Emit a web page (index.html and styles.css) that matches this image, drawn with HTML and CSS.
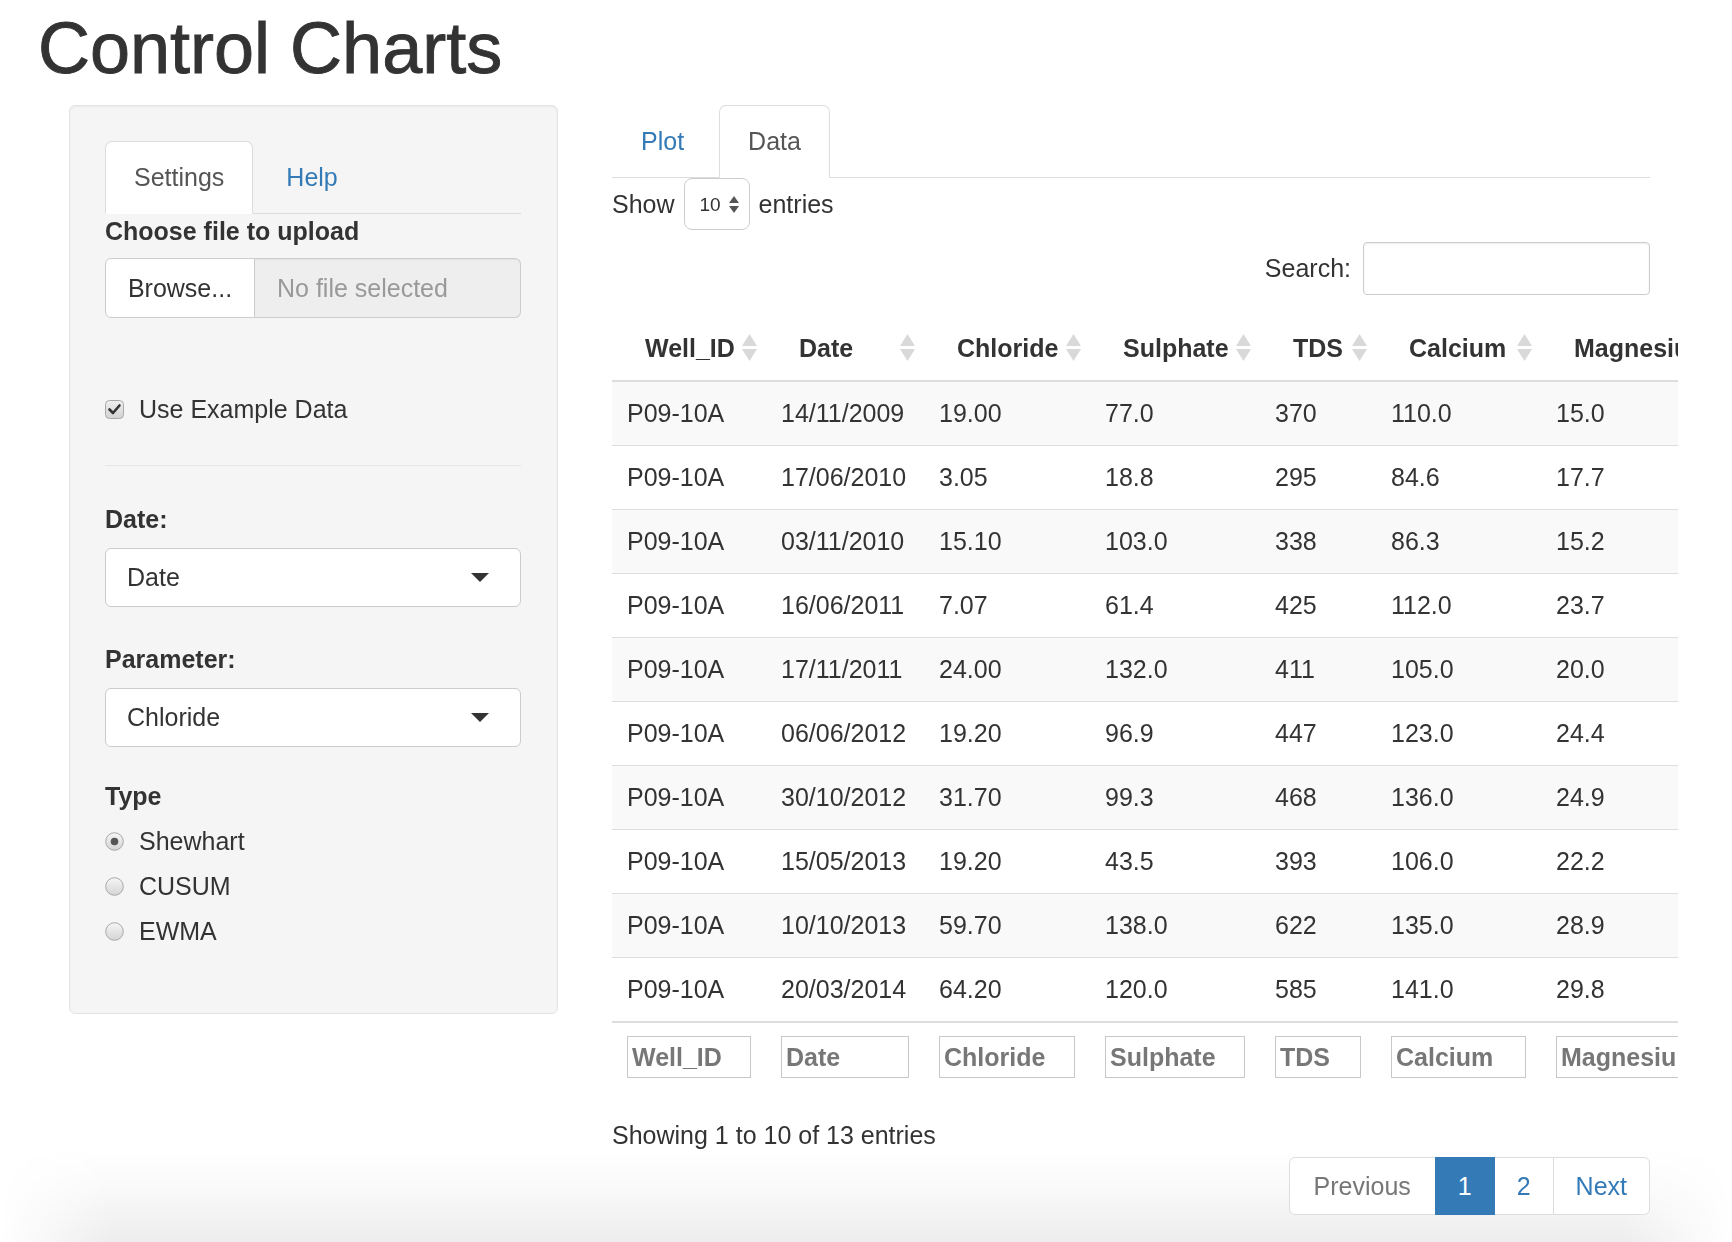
FILE: index.html
```html
<!DOCTYPE html>
<html lang="en">
<head>
<meta charset="utf-8">
<title>Control Charts</title>
<link rel="stylesheet" href="styles.css">
</head>
<body>
<div class="window-shadow"></div>
<div class="page">
  <h1 class="title">Control Charts</h1>
  <div class="layout">
    <aside class="well">
      <nav class="tabs">
        <span class="tab active">Settings</span>
        <span class="tab link">Help</span>
      </nav>
      <div class="label">Choose file to upload</div>
      <div class="file-input">
        <span class="browse">Browse...</span>
        <span class="file-name">No file selected</span>
      </div>
      <div class="check-row">
        <svg class="checkbox" width="19" height="19" viewBox="0 0 19 19">
          <defs>
            <linearGradient id="cbg" x1="0" y1="0" x2="0" y2="1">
              <stop offset="0" stop-color="#f0f0f0"/>
              <stop offset="1" stop-color="#d2d2d2"/>
            </linearGradient>
          </defs>
          <rect x="0.5" y="0.5" width="18" height="18" rx="4" fill="url(#cbg)" stroke="#a8a8a8"/>
          <path d="M4.5 9.5 L8 13 L14.5 5.5" fill="none" stroke="#333" stroke-width="2.6" stroke-linecap="round" stroke-linejoin="round"/>
        </svg>
        <span>Use Example Data</span>
      </div>
      <hr class="divider">
      <div class="label label-date">Date:</div>
      <div class="select">
        <span>Date</span>
        <svg width="18" height="9" viewBox="0 0 18 9"><polygon points="0,0 18,0 9,9" fill="#333"/></svg>
      </div>
      <div class="label label-param">Parameter:</div>
      <div class="select">
        <span>Chloride</span>
        <svg width="18" height="9" viewBox="0 0 18 9"><polygon points="0,0 18,0 9,9" fill="#333"/></svg>
      </div>
      <div class="label label-type">Type</div>
      <div class="radios">
        <div class="radio-row">
          <svg width="19" height="19" viewBox="0 0 19 19">
            <defs>
              <linearGradient id="rbg" x1="0" y1="0" x2="0" y2="1">
                <stop offset="0" stop-color="#f6f6f6"/>
                <stop offset="1" stop-color="#d4d4d4"/>
              </linearGradient>
            </defs>
            <circle cx="9.5" cy="9.5" r="8.8" fill="url(#rbg)" stroke="#a8a8a8"/>
            <circle cx="9.5" cy="9.5" r="3.8" fill="#555"/>
          </svg>
          <span>Shewhart</span>
        </div>
        <div class="radio-row">
          <svg width="19" height="19" viewBox="0 0 19 19"><circle cx="9.5" cy="9.5" r="8.8" fill="url(#rbg)" stroke="#a8a8a8"/></svg>
          <span>CUSUM</span>
        </div>
        <div class="radio-row">
          <svg width="19" height="19" viewBox="0 0 19 19"><circle cx="9.5" cy="9.5" r="8.8" fill="url(#rbg)" stroke="#a8a8a8"/></svg>
          <span>EWMA</span>
        </div>
      </div>
    </aside>

    <main class="main">
      <nav class="tabs main-tabs">
        <span class="tab link">Plot</span>
        <span class="tab active">Data</span>
      </nav>
      <div class="length-row">
        <span>Show</span>
        <span class="len-select">
          <span>10</span>
          <svg width="10" height="17" viewBox="0 0 10 17"><polygon points="5,0 10,7 0,7" fill="#555"/><polygon points="0,10 10,10 5,17" fill="#555"/></svg>
        </span>
        <span>entries</span>
      </div>
      <div class="search-row">
        <span>Search:</span>
        <span class="search-input"></span>
      </div>
      <div class="table-wrap">
        <table class="data">
          <colgroup>
            <col style="width:154px"><col style="width:158px"><col style="width:166px"><col style="width:170px"><col style="width:116px"><col style="width:165px"><col style="width:200px">
          </colgroup>
          <thead>
            <tr>
              <th>Well_ID<svg class="sort" width="15" height="28" viewBox="0 0 15 28"><polygon points="7.5,0 15,12 0,12"/><polygon points="0,15 15,15 7.5,27"/></svg></th>
              <th>Date<svg class="sort" width="15" height="28" viewBox="0 0 15 28"><polygon points="7.5,0 15,12 0,12"/><polygon points="0,15 15,15 7.5,27"/></svg></th>
              <th>Chloride<svg class="sort" width="15" height="28" viewBox="0 0 15 28"><polygon points="7.5,0 15,12 0,12"/><polygon points="0,15 15,15 7.5,27"/></svg></th>
              <th>Sulphate<svg class="sort" width="15" height="28" viewBox="0 0 15 28"><polygon points="7.5,0 15,12 0,12"/><polygon points="0,15 15,15 7.5,27"/></svg></th>
              <th>TDS<svg class="sort" width="15" height="28" viewBox="0 0 15 28"><polygon points="7.5,0 15,12 0,12"/><polygon points="0,15 15,15 7.5,27"/></svg></th>
              <th>Calcium<svg class="sort" width="15" height="28" viewBox="0 0 15 28"><polygon points="7.5,0 15,12 0,12"/><polygon points="0,15 15,15 7.5,27"/></svg></th>
              <th>Magnesium<svg class="sort" width="15" height="28" viewBox="0 0 15 28"><polygon points="7.5,0 15,12 0,12"/><polygon points="0,15 15,15 7.5,27"/></svg></th>
            </tr>
          </thead>
          <tbody>
            <tr><td>P09-10A</td><td>14/11/2009</td><td>19.00</td><td>77.0</td><td>370</td><td>110.0</td><td>15.0</td></tr>
            <tr><td>P09-10A</td><td>17/06/2010</td><td>3.05</td><td>18.8</td><td>295</td><td>84.6</td><td>17.7</td></tr>
            <tr><td>P09-10A</td><td>03/11/2010</td><td>15.10</td><td>103.0</td><td>338</td><td>86.3</td><td>15.2</td></tr>
            <tr><td>P09-10A</td><td>16/06/2011</td><td>7.07</td><td>61.4</td><td>425</td><td>112.0</td><td>23.7</td></tr>
            <tr><td>P09-10A</td><td>17/11/2011</td><td>24.00</td><td>132.0</td><td>411</td><td>105.0</td><td>20.0</td></tr>
            <tr><td>P09-10A</td><td>06/06/2012</td><td>19.20</td><td>96.9</td><td>447</td><td>123.0</td><td>24.4</td></tr>
            <tr><td>P09-10A</td><td>30/10/2012</td><td>31.70</td><td>99.3</td><td>468</td><td>136.0</td><td>24.9</td></tr>
            <tr><td>P09-10A</td><td>15/05/2013</td><td>19.20</td><td>43.5</td><td>393</td><td>106.0</td><td>22.2</td></tr>
            <tr><td>P09-10A</td><td>10/10/2013</td><td>59.70</td><td>138.0</td><td>622</td><td>135.0</td><td>28.9</td></tr>
            <tr><td>P09-10A</td><td>20/03/2014</td><td>64.20</td><td>120.0</td><td>585</td><td>141.0</td><td>29.8</td></tr>
          </tbody>
          <tfoot>
            <tr>
              <td><span class="filter">Well_ID</span></td>
              <td><span class="filter">Date</span></td>
              <td><span class="filter">Chloride</span></td>
              <td><span class="filter">Sulphate</span></td>
              <td><span class="filter">TDS</span></td>
              <td><span class="filter">Calcium</span></td>
              <td><span class="filter">Magnesium</span></td>
            </tr>
          </tfoot>
        </table>
      </div>
      <div class="info">Showing 1 to 10 of 13 entries</div>
      <div class="pager-row">
        <ul class="pagination">
          <li class="disabled">Previous</li>
          <li class="current">1</li>
          <li>2</li>
          <li>Next</li>
        </ul>
      </div>
    </main>
  </div>
</div>
</body>
</html>
```

FILE: styles.css
```css
html {
  margin: 0;
  padding: 0;
  background: #fff;
  overflow: hidden;
}

body {
  margin: 0;
  padding: 0;
  overflow: hidden;
  font-family: "Liberation Sans", Arial, Helvetica, sans-serif;
  font-size: 25px;
  line-height: 35px;
  color: #333;
}

/* soft window shadow along the bottom edge of the screenshot */
.window-shadow {
  position: fixed;
  left: 0;
  right: 0;
  bottom: 0;
  height: 95px;
  background: linear-gradient(to bottom, rgba(0, 0, 0, 0), rgba(0, 0, 0, 0.018) 40%, rgba(0, 0, 0, 0.07));
  -webkit-mask-image: linear-gradient(to right, transparent 0, #000 110px, #000 calc(100% - 110px), transparent 100%);
  mask-image: linear-gradient(to right, transparent 0, #000 110px, #000 calc(100% - 110px), transparent 100%);
  z-index: -1;
}

.page {
  padding: 9px 0 0 38px;
}

.title {
  margin: 0 0 17px 0;
  font-size: 72px;
  line-height: 79px;
  font-weight: normal;
  color: #333;
  -webkit-text-stroke: 0.9px #333;
}

.layout {
  display: flex;
  align-items: flex-start;
}

/* ---------- sidebar well ---------- */
.well {
  margin-left: 31px;
  width: 489px;
  box-sizing: border-box;
  padding: 35px 36px 64px 35px;
  background: #f5f5f5;
  border: 1px solid #e3e3e3;
  border-radius: 6px;
  box-shadow: inset 0 1px 2px rgba(0, 0, 0, 0.05);
}

.tabs {
  display: flex;
  border-bottom: 1px solid #ddd;
  height: 72px;
}

.tab {
  box-sizing: border-box;
  height: 73px;
  margin-bottom: -1px;
  margin-right: 4px;
  padding: 0 28px;
  display: flex;
  align-items: center;
  border: 1px solid transparent;
  border-radius: 7px 7px 0 0;
  color: #555;
}

.tab.active {
  background: #fff;
  border-color: #ddd;
  border-bottom-color: transparent;
}

.tab.link {
  color: #337ab7;
}

.label {
  font-weight: bold;
  color: #333;
}

.file-input {
  display: flex;
  margin-top: 9px;
  height: 60px;
}

.browse {
  box-sizing: border-box;
  width: 150px;
  display: flex;
  align-items: center;
  justify-content: center;
  background: #fff;
  border: 1px solid #ccc;
  border-radius: 6px 0 0 6px;
  color: #333;
}

.file-name {
  flex: 1;
  display: flex;
  align-items: center;
  padding-left: 22px;
  background: #eee;
  border: 1px solid #ccc;
  border-left: 0;
  border-radius: 0 6px 6px 0;
  color: #999;
  box-shadow: inset 0 1px 1px rgba(0, 0, 0, 0.05);
}

.check-row {
  margin-top: 74px;
  display: flex;
  align-items: center;
  gap: 15px;
}

.divider {
  margin: 38px 0 0 0;
  border: 0;
  border-top: 1px solid #e6e6e6;
}

.label-date {
  margin-top: 36px;
}

.select {
  box-sizing: border-box;
  margin-top: 11px;
  height: 59px;
  display: flex;
  align-items: center;
  justify-content: space-between;
  padding: 0 31px 0 21px;
  background: #fff;
  border: 1px solid #ccc;
  border-radius: 6px;
}

.label-param {
  margin-top: 35px;
}

.label-param + .select {
  margin-top: 11px;
}

.label-type {
  margin-top: 32px;
}

.radios {
  margin-top: 10px;
  display: flex;
  flex-direction: column;
  gap: 10px;
}

.radio-row {
  display: flex;
  align-items: center;
  gap: 15px;
}

/* ---------- main panel ---------- */
.main {
  margin-left: 54px;
  width: 1038px;
}

.main-tabs .tab {
  margin-right: 6px;
}

.length-row {
  margin-top: 0;
  display: flex;
  align-items: center;
  gap: 9px;
  height: 52px;
}

.len-select {
  box-sizing: border-box;
  width: 66px;
  height: 52px;
  display: flex;
  align-items: center;
  gap: 8px;
  padding-left: 15px;
  border: 1px solid #ccc;
  border-radius: 8px;
  font-size: 19px;
  background: #fff;
}

.search-row {
  margin-top: 12px;
  display: flex;
  justify-content: flex-end;
  align-items: center;
  gap: 12px;
}

.search-input {
  box-sizing: border-box;
  width: 287px;
  height: 53px;
  border: 1px solid #ccc;
  border-radius: 4px;
  box-shadow: inset 0 1px 2px rgba(0, 0, 0, 0.08);
}

.table-wrap {
  margin-top: 22px;
  width: 1066px;
  overflow: hidden;
}

.data {
  table-layout: fixed;
  width: 1129px;
  border-collapse: collapse;
  border-spacing: 0;
}

.data th {
  position: relative;
  text-align: left;
  font-weight: bold;
  padding: 14px 15px 14px 33px;
  border-bottom: 2px solid #ddd;
  white-space: nowrap;
}

.data th .sort {
  position: absolute;
  right: 9px;
  top: 17px;
  fill: #d9d9d9;
}

.data td {
  padding: 14px 15px;
  border-top: 1px solid #ddd;
  white-space: nowrap;
}

.data tbody tr:nth-child(odd) td {
  background: #f9f9f9;
}

.data tfoot td {
  border-top: 2px solid #ddd;
  padding: 13px 15px 13px 15px;
}

.filter {
  display: block;
  box-sizing: border-box;
  height: 42px;
  line-height: 40px;
  padding-left: 4px;
  border: 1px solid #c8c8c8;
  font-weight: bold;
  color: #777;
  overflow: hidden;
  white-space: nowrap;
}

.info {
  margin-top: 27px;
}

.pager-row {
  margin-top: 4px;
  display: flex;
  justify-content: flex-end;
}

.pagination {
  display: flex;
  margin: 0;
  padding: 0;
  list-style: none;
}

.pagination li {
  box-sizing: border-box;
  height: 58px;
  display: flex;
  align-items: center;
  padding: 0 22px;
  margin-left: -1px;
  background: #fff;
  border: 1px solid #ddd;
  color: #337ab7;
}

.pagination li:first-child {
  margin-left: 0;
  padding: 0 24px;
  border-radius: 6px 0 0 6px;
}

.pagination li:last-child {
  border-radius: 0 6px 6px 0;
}

.pagination li.disabled {
  color: #777;
}

.pagination li.current {
  background: #337ab7;
  border-color: #337ab7;
  color: #fff;
  position: relative;
}
```
